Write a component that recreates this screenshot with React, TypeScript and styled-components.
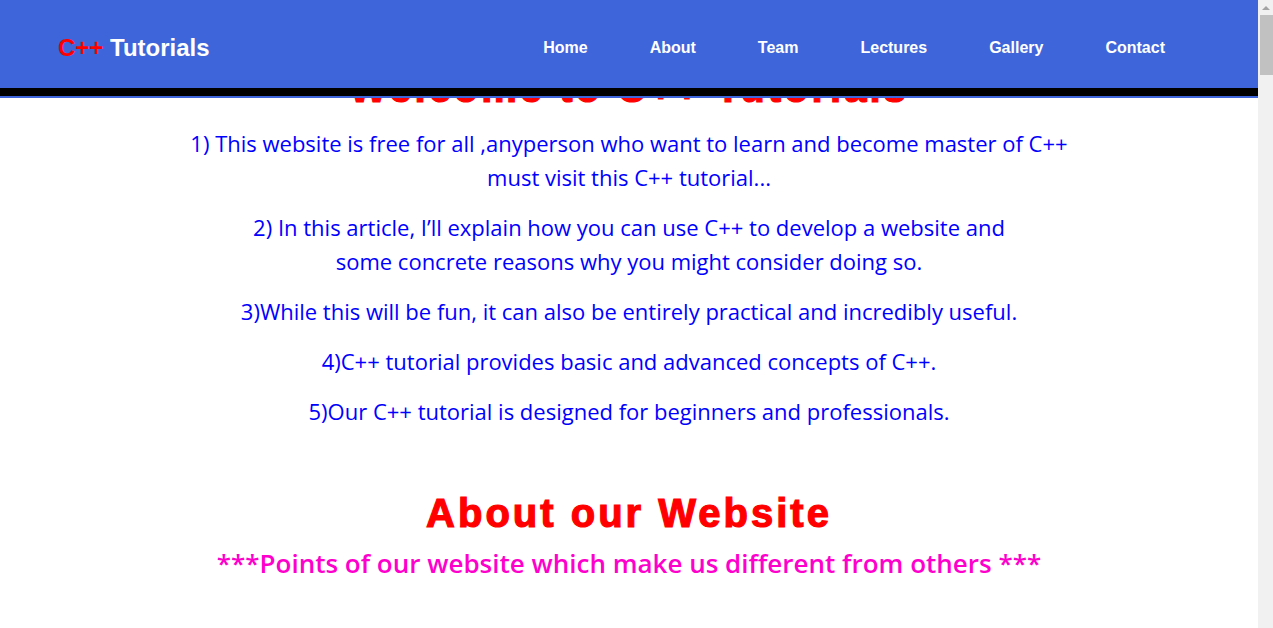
import React from "react"
import styled, { createGlobalStyle } from "styled-components"

// ______________________________________________________
// 共通
const GlobalStyle = createGlobalStyle`
  html, body {
    margin: 0;
    padding: 0;
    height: 100%;
    overflow: hidden;
    background: #fff;
  }
  body {
    font-family: "Open Sans", "Noto Sans", sans-serif;
  }
`

const blue = "#3e66da"

const navItems = ["Home", "About", "Team", "Lectures", "Gallery", "Contact"]

const points = [
  [
    "1) This website is free for all ,anyperson who want to learn and become master of C++",
    "must visit this C++ tutorial...",
  ],
  [
    "2) In this article, I\u2019ll explain how you can use C++ to develop a website and",
    "some concrete reasons why you might consider doing so.",
  ],
  ["3)While this will be fun, it can also be entirely practical and incredibly useful."],
  ["4)C++ tutorial provides basic and advanced concepts of C++."],
  ["5)Our C++ tutorial is designed for beginners and professionals."],
]

// ______________________________________________________
//
const App: React.FC = () => {
  return (
    <Shell>
      <GlobalStyle />
      <Page>
        <Header>
          <Logo>
            <span className="red">C++</span> Tutorials
          </Logo>
          <Nav>
            {navItems.map(item => (
              <NavLink key={item} href="#">
                {item}
              </NavLink>
            ))}
          </Nav>
        </Header>
        <Main>
          <Title>Welcome to C++ Tutorials</Title>
          {points.map((lines, i) => (
            <Point key={i}>
              {lines.map((line, j) => (
                <React.Fragment key={j}>
                  {j > 0 && <br />}
                  {line}
                </React.Fragment>
              ))}
            </Point>
          ))}
          <Title $gap>About our Website</Title>
          <SubTitle>
            ***Points of our website which make us different from others ***
          </SubTitle>
        </Main>
      </Page>
      <ScrollBar>
        <ArrowUp />
        <Thumb />
      </ScrollBar>
    </Shell>
  )
}

export default App

// ______________________________________________________
// スタイル
const Shell = styled.div`
  display: flex;
  height: 100vh;
`

const Page = styled.div`
  flex: 1;
  position: relative;
  overflow: hidden;
`

// 固定ヘッダー（本文の上に重なる）
const Header = styled.header`
  position: absolute;
  top: 0;
  left: 0;
  right: 0;
  z-index: 10;
  display: flex;
  align-items: center;
  justify-content: space-between;
  padding: 7px 93px 0 58px;
  box-sizing: border-box;
  height: 96px;
  background: ${blue};
  border-bottom: 8px solid #000;
  box-shadow: 0 2px 0 ${blue};
  font-family: "Liberation Sans", Arial, sans-serif;
  font-weight: 700;
`

const Logo = styled.div`
  color: #fff;
  font-size: 24px;
  .red {
    color: red;
  }
`

const Nav = styled.nav`
  display: flex;
  gap: 62px;
`

const NavLink = styled.a`
  color: #fff;
  font-size: 16px;
  text-decoration: none;
`

const Main = styled.main`
  padding-top: 65px;
  text-align: center;
`

const Title = styled.h1<{ $gap?: boolean }>`
  margin: ${p => (p.$gap ? "62px" : "0")} 0 0;
  font-family: "Liberation Sans", Arial, sans-serif;
  font-size: 40px;
  font-weight: 700;
  line-height: 46px;
  letter-spacing: 3px;
  color: red;
  -webkit-text-stroke: 1.2px red;
`

const Point = styled.p`
  margin: 16px 0 0;
  font-size: 22px;
  line-height: 34px;
  color: blue;
  white-space: nowrap;
  &:first-of-type {
    margin-top: 15px;
  }
`

const SubTitle = styled.h3`
  margin: 10px 0 0;
  font-size: 26px;
  font-weight: 600;
  line-height: 34px;
  color: #f0c;
`

const ScrollBar = styled.div`
  width: 15px;
  flex-shrink: 0;
  display: flex;
  flex-direction: column;
  background: #f1f1f1;
`

const ArrowUp = styled.div`
  width: 15px;
  height: 15px;
  flex-shrink: 0;
  display: flex;
  align-items: center;
  justify-content: center;
  &::before {
    content: "";
    border-left: 4px solid transparent;
    border-right: 4px solid transparent;
    border-bottom: 4px solid #a3a3a3;
  }
`

const Thumb = styled.div`
  width: 13px;
  margin-left: 2px;
  height: 60px;
  background: #c1c1c1;
`
